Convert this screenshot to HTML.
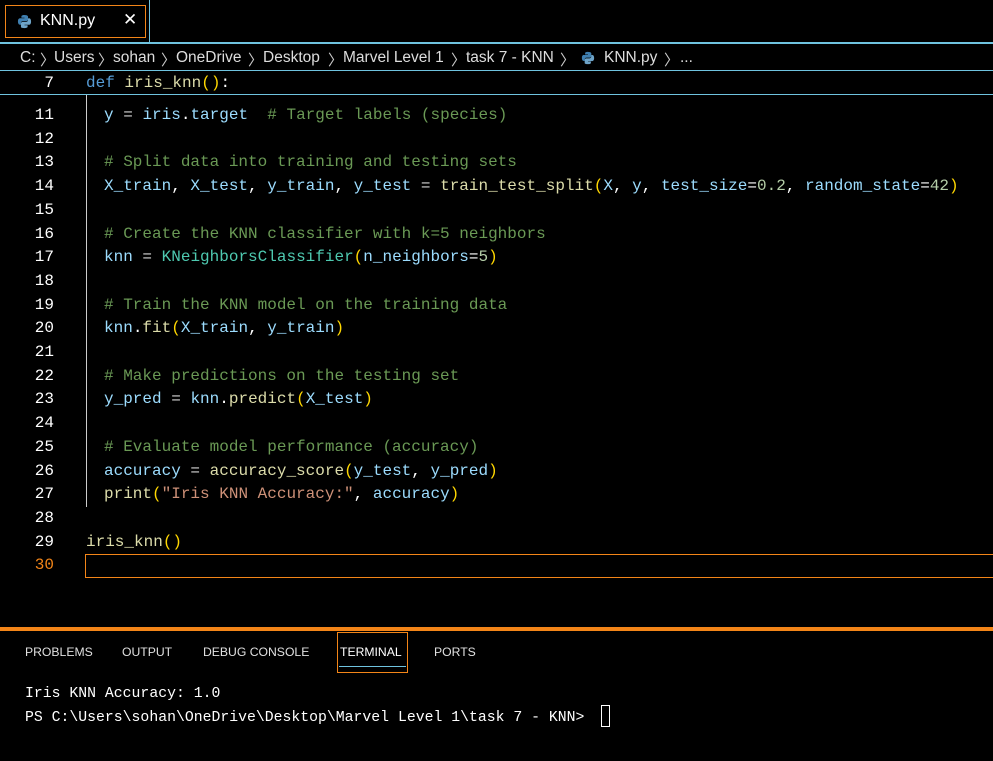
<!DOCTYPE html>
<html><head><meta charset="utf-8"><style>
*{margin:0;padding:0;box-sizing:border-box}
body{width:993px;height:761px;background:#000;position:relative;overflow:hidden;font-family:"Liberation Sans",sans-serif;color:#fff}
.abs{position:absolute}
.hl{position:absolute;left:0;width:993px;height:2px;background:#6fc3df}
.code{font-family:"Liberation Mono",monospace;font-size:16px;white-space:pre;position:absolute;line-height:23.7px}
.ln{position:absolute;left:0;width:54px;text-align:right;font-family:"Liberation Mono",monospace;font-size:16px;line-height:23.7px;color:#fff}
.k{color:#569cd6}.f{color:#dcdcaa}.v{color:#9cdcfe}.c{color:#6a9955}.n{color:#b5cea8}.s{color:#ce9178}.p{color:#ffd700}.cl{color:#4ec9b0}.o{color:#d4d4d4}
.bc{position:absolute;top:49px;font-size:15.5px;color:#ddd;white-space:pre}
.ch{position:absolute;top:49px;font-size:15px;color:#ccc}
.tab{position:absolute;top:645px;font-size:12.2px;color:#e0e0e0}
</style></head><body>
<div class="abs" style="left:5px;top:5px;width:141px;height:33px;border:1px solid #f38518"></div>
<svg class="abs" style="left:17px;top:14px" width="15" height="15" viewBox="0 0 16 16"><path d="M7.9 1C4.5 1 4.7 2.5 4.7 2.5V4h3.3v.5H3.4S1 4.2 1 7.9s2.1 3.5 2.1 3.5h1.2V9.7s-.1-2.1 2.1-2.1h3.4s2 0 2-2V2.9S12.1 1 7.9 1z" fill="#3f7fb0"/><path d="M8.1 15c3.4 0 3.2-1.5 3.2-1.5V12H8v-.5h4.6S15 11.8 15 8.1s-2.1-3.5-2.1-3.5h-1.2v1.7s.1 2.1-2.1 2.1H6.2s-2 0-2 2v3.3S3.9 15 8.1 15z" fill="#6ea4c9"/></svg>
<div class="abs" style="left:40px;top:12px;font-size:16px;color:#fff">KNN.py</div>
<div class="abs" style="left:123px;top:10px;font-size:17px;color:#fff">✕</div>
<div class="abs" style="left:149px;top:0;width:1px;height:42px;background:#6fc3df"></div>
<div class="hl" style="top:42px"></div>
<div class="bc" style="left:20px">C:</div><div class="ch" style="left:40px">〉</div>
<div class="bc" style="left:54px">Users</div><div class="ch" style="left:98px">〉</div>
<div class="bc" style="left:113px">sohan</div><div class="ch" style="left:161px">〉</div>
<div class="bc" style="left:176px">OneDrive</div><div class="ch" style="left:248px">〉</div>
<div class="bc" style="left:263px">Desktop</div><div class="ch" style="left:328px">〉</div>
<div class="bc" style="left:343px">Marvel Level 1</div><div class="ch" style="left:451px">〉</div>
<div class="bc" style="left:466px">task 7 - KNN</div><div class="ch" style="left:560px">〉</div>
<div class="bc" style="left:604px">KNN.py</div><div class="ch" style="left:664px">〉</div>
<div class="bc" style="left:680px">...</div>
<svg class="abs" style="left:581px;top:51px" width="14" height="14" viewBox="0 0 16 16"><path d="M7.9 1C4.5 1 4.7 2.5 4.7 2.5V4h3.3v.5H3.4S1 4.2 1 7.9s2.1 3.5 2.1 3.5h1.2V9.7s-.1-2.1 2.1-2.1h3.4s2 0 2-2V2.9S12.1 1 7.9 1z" fill="#3f7fb0"/><path d="M8.1 15c3.4 0 3.2-1.5 3.2-1.5V12H8v-.5h4.6S15 11.8 15 8.1s-2.1-3.5-2.1-3.5h-1.2v1.7s.1 2.1-2.1 2.1H6.2s-2 0-2 2v3.3S3.9 15 8.1 15z" fill="#6ea4c9"/></svg>
<div class="hl" style="top:70px;height:1px"></div>
<div class="ln" style="top:72px">7</div>
<div class="code" style="left:86px;top:72px"><span class="k">def</span> <span class="f">iris_knn</span><span class="p">()</span>:</div>
<div class="hl" style="top:94px;height:1px"></div>
<div class="abs" style="left:86px;top:95px;width:1px;height:412px;background:#ccc"></div>
<div class="ln" style="top:104px">11<br>12<br>13<br>14<br>15<br>16<br>17<br>18<br>19<br>20<br>21<br>22<br>23<br>24<br>25<br>26<br>27<br>28<br>29<br><span style="color:#f38518">30</span></div>
<div class="code" style="left:104px;top:104px"><span class="v">y</span> <span class="o">=</span> <span class="v">iris</span>.<span class="v">target</span>  <span class="c"># Target labels (species)</span>

<span class="c"># Split data into training and testing sets</span>
<span class="v">X_train</span>, <span class="v">X_test</span>, <span class="v">y_train</span>, <span class="v">y_test</span> <span class="o">=</span> <span class="f">train_test_split</span><span class="p">(</span><span class="v">X</span>, <span class="v">y</span>, <span class="v">test_size</span>=<span class="n">0.2</span>, <span class="v">random_state</span>=<span class="n">42</span><span class="p">)</span>

<span class="c"># Create the KNN classifier with k=5 neighbors</span>
<span class="v">knn</span> <span class="o">=</span> <span class="cl">KNeighborsClassifier</span><span class="p">(</span><span class="v">n_neighbors</span>=<span class="n">5</span><span class="p">)</span>

<span class="c"># Train the KNN model on the training data</span>
<span class="v">knn</span>.<span class="f">fit</span><span class="p">(</span><span class="v">X_train</span>, <span class="v">y_train</span><span class="p">)</span>

<span class="c"># Make predictions on the testing set</span>
<span class="v">y_pred</span> <span class="o">=</span> <span class="v">knn</span>.<span class="f">predict</span><span class="p">(</span><span class="v">X_test</span><span class="p">)</span>

<span class="c"># Evaluate model performance (accuracy)</span>
<span class="v">accuracy</span> <span class="o">=</span> <span class="f">accuracy_score</span><span class="p">(</span><span class="v">y_test</span>, <span class="v">y_pred</span><span class="p">)</span>
<span class="f">print</span><span class="p">(</span><span class="s">"Iris KNN Accuracy:"</span>, <span class="v">accuracy</span><span class="p">)</span></div>
<div class="code" style="left:86px;top:530.6px"><span class="f">iris_knn</span><span class="p">()</span></div>
<div class="abs" style="left:85px;top:554px;width:910px;height:24px;border:1px solid #f38518"></div>
<div class="abs" style="left:0;top:627px;width:993px;height:4px;background:#f38518"></div>
<div class="tab" style="left:25px">PROBLEMS</div>
<div class="tab" style="left:122px">OUTPUT</div>
<div class="tab" style="left:203px">DEBUG CONSOLE</div>
<div class="tab" style="left:340px;color:#fff">TERMINAL</div>
<div class="tab" style="left:434px">PORTS</div>
<div class="abs" style="left:337px;top:632px;width:71px;height:41px;border:1px solid #f38518"></div>
<div class="abs" style="left:339px;top:666px;width:67px;height:1px;background:#6fc3df"></div>
<div class="code" style="left:25px;top:683px;font-size:14.8px;line-height:23.7px">Iris KNN Accuracy: 1.0
PS C:\Users\sohan\OneDrive\Desktop\Marvel Level 1\task 7 - KNN&gt;</div>
<div class="abs" style="left:601px;top:705px;width:9px;height:22px;border:1px solid #fff"></div>
</body></html>
